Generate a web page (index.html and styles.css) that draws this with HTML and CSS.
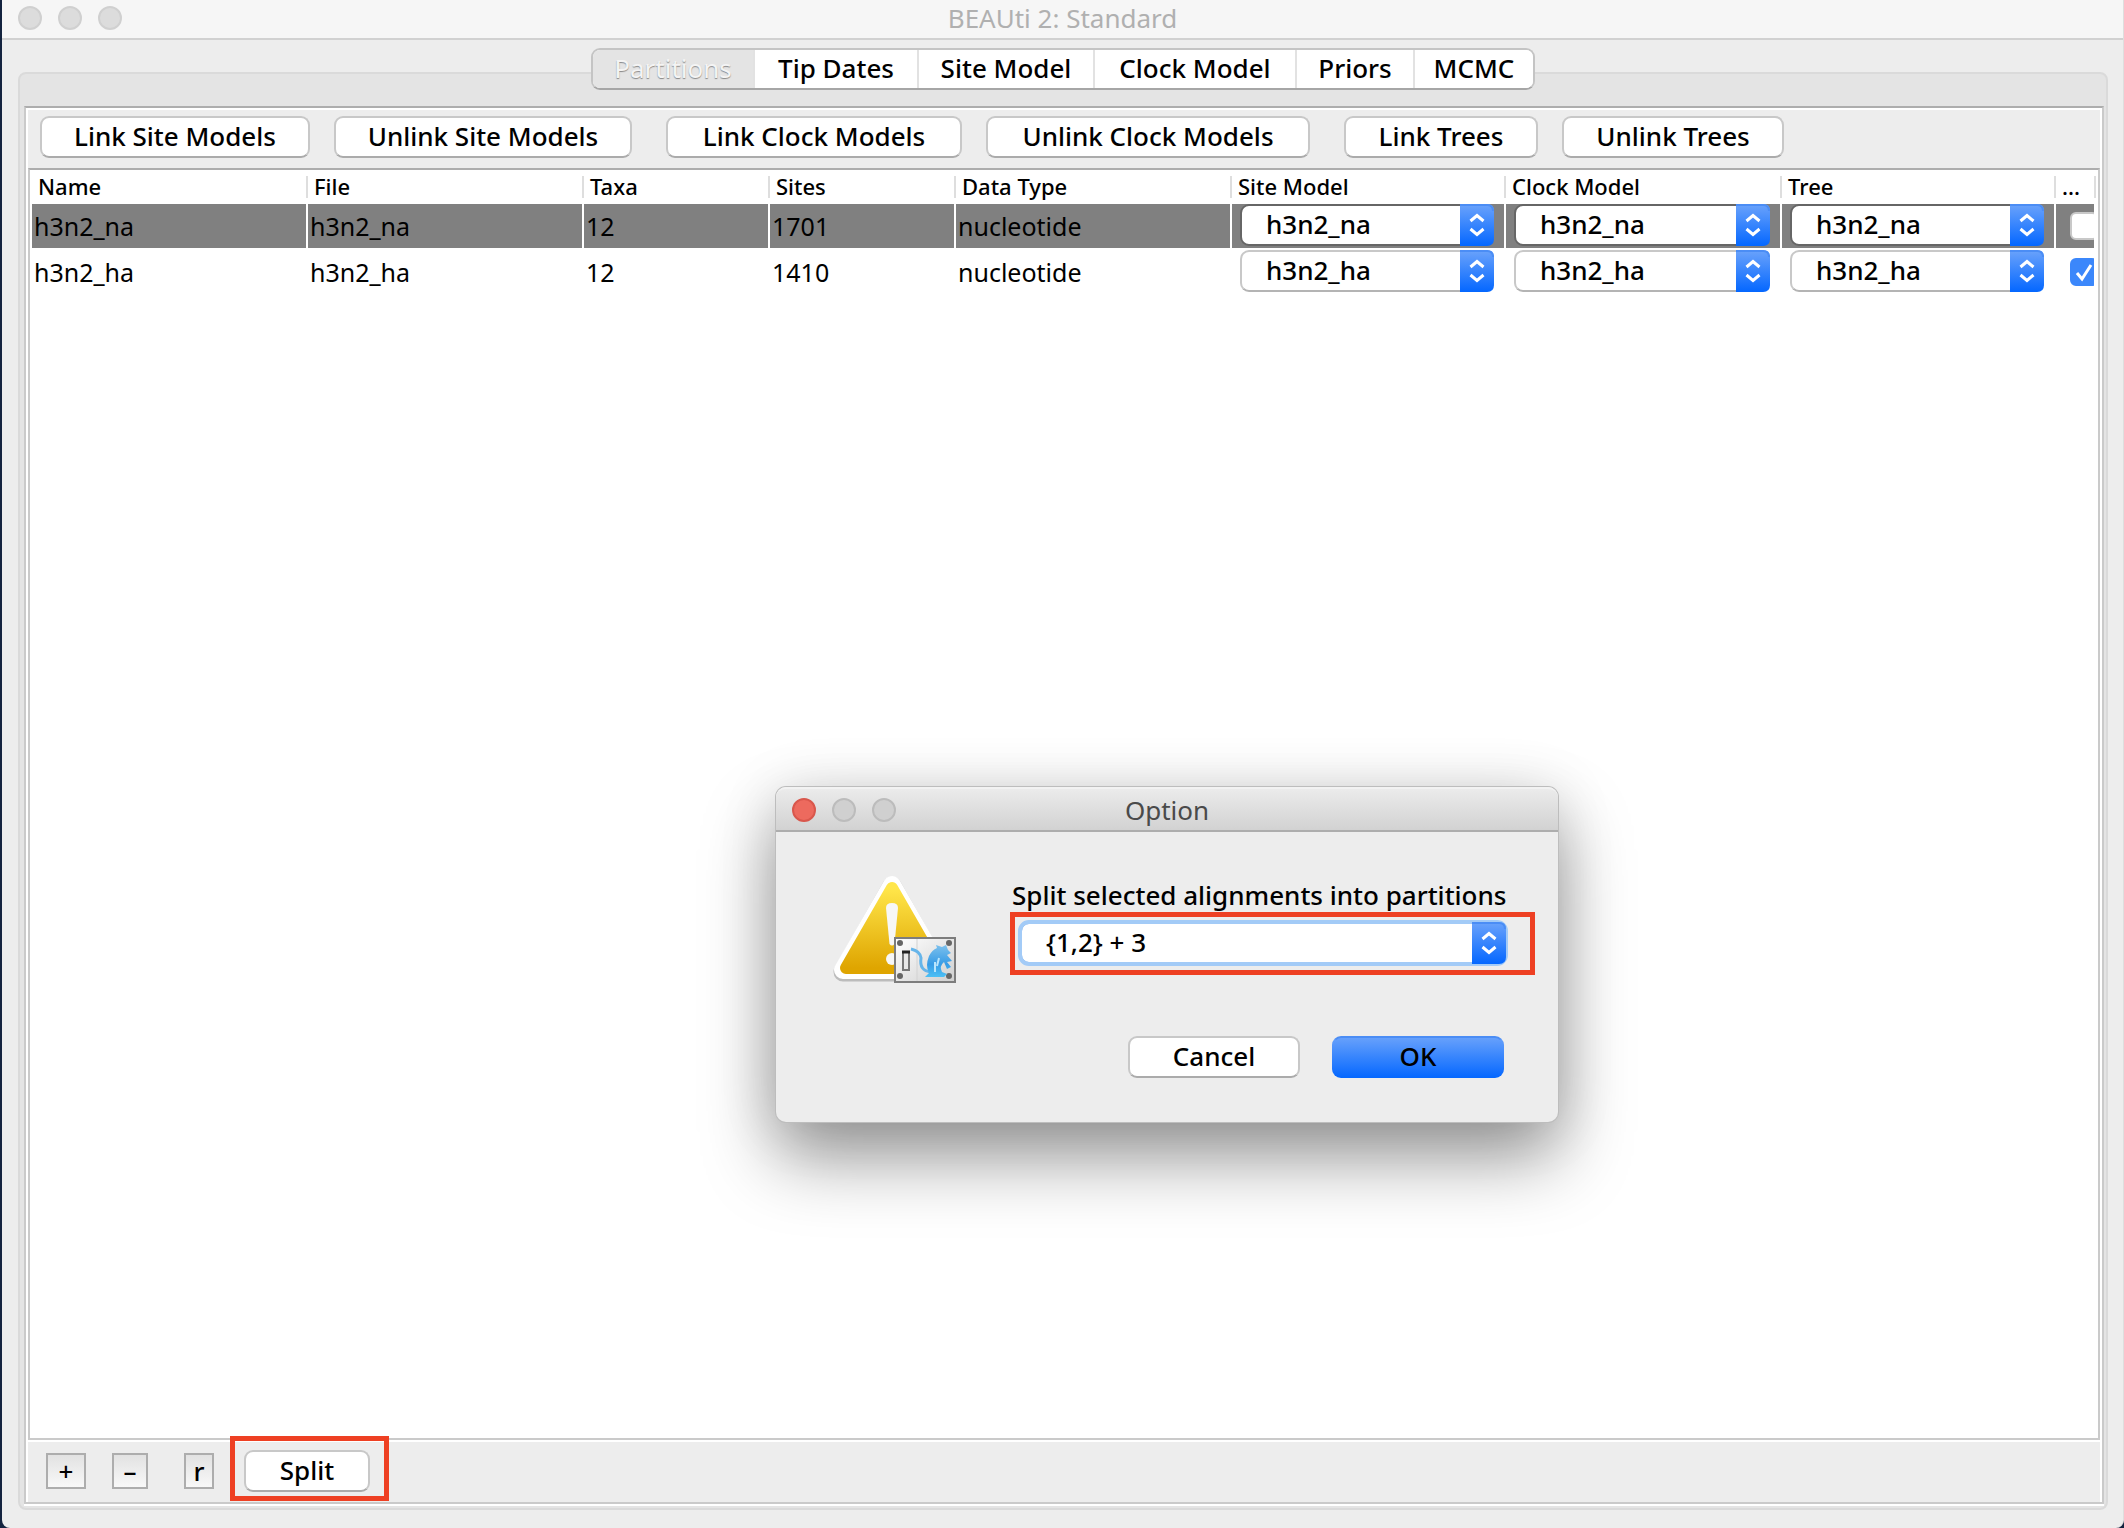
FILE: index.html
```html
<!DOCTYPE html>
<html lang="en">
<head>
<meta charset="utf-8">
<title>BEAUti 2: Standard</title>
<link rel="stylesheet" href="styles.css">
</head>
<body>
<svg width="0" height="0" class="defs" aria-hidden="true">
  <defs>
    <linearGradient id="cap" x1="0" y1="0" x2="0" y2="1"><stop offset="0" stop-color="#6ba3fb"/><stop offset="1" stop-color="#0467ff"/></linearGradient>
    <symbol id="stepper" viewBox="0 0 34 42">
      <path d="M0 0H27Q34 0 34 7V35Q34 42 27 42H0Z" fill="url(#cap)"/>
      <path d="M0 1H27Q33 1 33 7" fill="none" stroke="#4b8df5" stroke-width="2"/>
      <path d="M10.500 17L17 11.500L23.500 17M10.500 25L17 30.500L23.500 25" fill="none" stroke="#fff" stroke-width="3"/>
    </symbol>
  </defs>
</svg>
<div class="window">
  <header class="titlebar">
    <div class="lights"><i class="light"></i><i class="light"></i><i class="light"></i></div>
    <h1 class="title">BEAUti 2: Standard</h1>
  </header>
  <main class="content">
    <nav class="tabs" role="tablist">
      <button class="tab tab-on" role="tab" aria-selected="true">Partitions</button>
      <button class="tab" role="tab">Tip Dates</button>
      <button class="tab" role="tab">Site Model</button>
      <button class="tab" role="tab">Clock Model</button>
      <button class="tab" role="tab">Priors</button>
      <button class="tab" role="tab">MCMC</button>
    </nav>
    <section class="group">
      <div class="panel">
        <div class="toolbar">
          <div class="pair pair-site"><button class="btn">Link Site Models</button><button class="btn">Unlink Site Models</button></div>
          <div class="pair pair-clock"><button class="btn">Link Clock Models</button><button class="btn">Unlink Clock Models</button></div>
          <div class="pair pair-tree"><button class="btn">Link Trees</button><button class="btn">Unlink Trees</button></div>
        </div>
        <div class="sheet">
          <table class="grid">
            <colgroup><col class="c-wide"><col class="c-wide"><col class="c-num"><col class="c-num"><col class="c-wide"><col class="c-model"><col class="c-wide"><col class="c-model"><col class="c-tick"></colgroup>
            <thead>
              <tr><th>Name</th><th>File</th><th>Taxa</th><th>Sites</th><th>Data Type</th><th>Site Model</th><th>Clock Model</th><th>Tree</th><th>...</th></tr>
            </thead>
            <tbody>
              <tr class="selected">
                <td>h3n2_na</td><td>h3n2_na</td><td>12</td><td>1701</td><td>nucleotide</td>
                <td class="pick"><span class="combo"><select aria-label="Site Model"><option>h3n2_na</option></select><svg class="cap"><use href="#stepper"/></svg></span></td>
                <td class="pick"><span class="combo"><select aria-label="Clock Model"><option>h3n2_na</option></select><svg class="cap"><use href="#stepper"/></svg></span></td>
                <td class="pick"><span class="combo"><select aria-label="Tree"><option>h3n2_na</option></select><svg class="cap"><use href="#stepper"/></svg></span></td>
                <td class="ticks"><span class="tick"><input type="checkbox" aria-label="Ambiguities"></span></td>
              </tr>
              <tr>
                <td>h3n2_ha</td><td>h3n2_ha</td><td>12</td><td>1410</td><td>nucleotide</td>
                <td class="pick"><span class="combo"><select aria-label="Site Model"><option>h3n2_ha</option></select><svg class="cap"><use href="#stepper"/></svg></span></td>
                <td class="pick"><span class="combo"><select aria-label="Clock Model"><option>h3n2_ha</option></select><svg class="cap"><use href="#stepper"/></svg></span></td>
                <td class="pick"><span class="combo"><select aria-label="Tree"><option>h3n2_ha</option></select><svg class="cap"><use href="#stepper"/></svg></span></td>
                <td class="ticks"><span class="tick"><input type="checkbox" aria-label="Ambiguities" checked><svg class="check" viewBox="0 0 28 28"><path d="M7 15L12 21L21 7" fill="none" stroke="#fff" stroke-width="3"/></svg></span></td>
              </tr>
            </tbody>
          </table>
        </div>
        <footer class="footer">
          <button class="mini mini-add">+</button>
          <button class="mini mini-del">–</button>
          <button class="mini mini-r">r</button>
          <span class="mark mark-split"><button class="btn">Split</button></span>
        </footer>
      </div>
    </section>
  </main>
</div>

<div class="dialog" role="dialog" aria-labelledby="dlg-title">
  <header class="dlg-bar">
    <div class="lights"><i class="light light-close"></i><i class="light"></i><i class="light"></i></div>
    <h2 class="title" id="dlg-title">Option</h2>
  </header>
  <div class="dlg-body">
    <svg class="warn" viewBox="0 0 126 112" aria-hidden="true">
      <defs>
        <linearGradient id="gold" x1="0" y1="0" x2="0" y2="1"><stop offset="0" stop-color="#ffe64a"/><stop offset="1" stop-color="#dfa500"/></linearGradient>
        <linearGradient id="plate" x1="0" y1="0" x2="1" y2="1"><stop offset="0" stop-color="#fff"/><stop offset="1" stop-color="#cfcfcf"/></linearGradient>
        <linearGradient id="gnu" x1="0" y1="0" x2="0" y2="1"><stop offset="0" stop-color="#7cc0ec"/><stop offset=".6" stop-color="#389ce6"/><stop offset="1" stop-color="#4cc0f5"/></linearGradient>
      </defs>
      <path d="M62 12L111 98H13Z" fill="#b4b4b4" stroke="#bcbcbc" stroke-width="19" stroke-linejoin="round"/>
      <path d="M62 11L111 96H13Z" fill="#fff" stroke="#fff" stroke-width="18" stroke-linejoin="round"/>
      <path d="M62 14L108 94H16Z" fill="url(#gold)" stroke="url(#gold)" stroke-width="12" stroke-linejoin="round"/>
      <path d="M56 34Q56 29 62 29Q68 29 68 34L64.500 70Q62 73 59.500 70Z" fill="#f7f7f7"/>
      <circle cx="62" cy="85" r="6" fill="#f7f7f7"/>
      <rect x="65" y="64" width="60" height="44" fill="url(#plate)" stroke="#7d7d7d" stroke-width="2"/>
      <path d="M87 65V107" stroke="#d2d2d2"/>
      <rect x="73" y="78" width="6" height="18" fill="#e8e8e8" stroke="#777" stroke-width="2"/>
      <path d="M72 78H80" stroke="#222" stroke-width="3"/>
      <g fill="#666"><circle cx="70" cy="69" r="3"/><circle cx="119" cy="69" r="3"/><circle cx="70" cy="102" r="3"/><circle cx="119" cy="102" r="3"/></g>
      <path d="M81 75Q90 77 91 84Q89 97 101 98" fill="none" stroke="#66b5ea" stroke-width="3"/>
      <path d="M99 82Q102 76 107 74L106 71L112 73L116 71L118 76L121 79L117 81L122 87L117 88L121 93L117 95L114 88Q109 92 112 98L117 100L114 103H95L99 99Q95 92 99 82Z" fill="url(#gnu)"/>
      <path d="M105 88V98M109 84L107 92" stroke="#b9e5fc" stroke-width="2"/>
    </svg>
    <div class="form">
      <label class="ask" for="split">Split selected alignments into partitions</label>
      <span class="mark mark-ask"><span class="combo combo-focus"><select id="split"><option>{1,2} + 3</option></select><svg class="cap"><use href="#stepper"/></svg></span></span>
      <div class="actions"><button class="btn">Cancel</button><button class="btn btn-ok">OK</button></div>
    </div>
  </div>
</div>
</body>
</html>
```
FILE: styles.css
```css
* { box-sizing: border-box; }

body {
  margin: 0;
  background: #14233f;
  color: #000;
  font: 500 26px/30px "Noto Sans", "Open Sans", sans-serif;
}

button, select, input { font: inherit; color: inherit; margin: 0; }
h1, h2 { margin: 0; font: inherit; }
.defs { position: absolute; }

/* main window */
.window {
  display: flex;
  flex-direction: column;
  min-height: 100vh;
  margin-left: 2px;
  background: #ededed;
  border-right: 1px solid #dedede;
  border-radius: 0 0 8px 8px;
}

.titlebar, .dlg-bar {
  display: grid;
  grid-template-columns: 1fr auto 1fr;
  align-items: center;
}

.titlebar {
  height: 40px;
  padding: 0 16px 2px;
  background: #f6f6f6;
  border-bottom: 2px solid #d1d1d1;
}

.title { font-weight: 400; }
.titlebar .title { color: #b0b0b0; }

.lights { display: flex; gap: 16px; }

.light {
  width: 24px;
  height: 24px;
  border: 2px solid #d0d0d0;
  border-radius: 50%;
  background: #dcdcdc;
}

.content {
  flex: 1;
  display: flex;
  flex-direction: column;
  padding: 8px 15px 18px 16px;
}

.tabs {
  z-index: 1;
  align-self: center;
  display: grid;
  grid-template-columns: 160px 164px 176px 202px 118px 120px;
  height: 42px;
  margin-bottom: -18px;
  background: #fff;
  border: 2px solid #c4c4c4;
  border-bottom-color: #a6a6a6;
  border-radius: 9px;
  overflow: hidden;
}

.tab {
  padding: 0 0 2px;
  border: 0;
  border-left: 2px solid #e2e2e2;
  background: #fff;
}

.tab-on {
  border-left: 0;
  background: #e4e4e4;
  color: #f4f4f4;
  font-weight: 400;
  text-shadow: 0 1px 1px #888;
}

.group {
  flex: 1;
  display: flex;
  padding: 32px 4px 4px;
  background: #e4e4e4;
  border: 2px solid #dadada;
  border-radius: 8px;
}

.panel {
  flex: 1;
  display: flex;
  flex-direction: column;
  background: #ededed;
  border: 2px solid #cacaca;
  border-top-color: #adadad;
  box-shadow: inset 0 2px 0 #fff, inset 2px 0 0 #fff, inset -2px 0 0 #fff, 0 2px 0 #fff;
}

.toolbar {
  display: flex;
  gap: 34px;
  padding: 8px 14px 10px;
}

.pair { display: grid; gap: 24px; }
.pair-site { grid-template-columns: 270px 298px; }
.pair-clock { grid-template-columns: 296px 324px; }
.pair-tree { grid-template-columns: 194px 222px; }

.btn {
  height: 42px;
  padding: 0 0 2px;
  background: #fff;
  border: 2px solid #c8c8c8;
  border-bottom-color: #ababab;
  border-radius: 9px;
}

/* partition table */
.sheet {
  flex: 1;
  margin: 0 2px;
  padding: 0 2px;
  background: #fff;
  border: 2px solid #cacaca;
  border-top-color: #adadad;
}

.grid {
  width: 100%;
  table-layout: fixed;
  border-spacing: 0;
}

.c-wide { width: 276px; }
.c-model { width: 274px; }
.c-num { width: 186px; }
.c-tick { width: 40px; }

.grid th {
  height: 34px;
  padding: 0 6px 2px;
  font-size: 22px;
  font-weight: 500;
  text-align: left;
  background: linear-gradient(#dedede, #dedede) right center / 2px 22px no-repeat;
}

.grid td {
  height: 46px;
  padding: 0 0 0 2px;
  border: solid #fff;
  border-width: 0 2px 2px 0;
  overflow: hidden;
  font-size: 25px;
  font-weight: 400;
}

.selected td { background: #808080; background-clip: padding-box; }
.grid .pick { padding: 0 10px 2px 8px; font-size: 26px; font-weight: 500; }
.grid .ticks { padding: 0 0 0 14px; }

.combo { display: grid; height: 42px; }

.combo select {
  grid-area: 1 / 1;
  width: 100%;
  height: 42px;
  padding: 0 40px 2px 24px;
  appearance: none;
  background: #fff;
  border: 2px solid #c8c8c8;
  border-bottom-color: #b4b4b4;
  border-radius: 9px;
}

.selected select { border-color: #666; }

.cap {
  z-index: 1;
  grid-area: 1 / 1;
  justify-self: end;
  width: 34px;
  height: 42px;
  pointer-events: none;
}

.tick { display: grid; width: 28px; height: 28px; }

.tick input {
  grid-area: 1 / 1;
  width: 28px;
  height: 28px;
  appearance: none;
  background: #fff;
  border: 2px solid #c8c8c8;
  border-radius: 6px;
}

.tick input:checked { background: #3b87fb; border-color: #3b87fb; }
.check { z-index: 1; grid-area: 1 / 1; pointer-events: none; }

/* buttons below the table */
.footer {
  display: flex;
  align-items: center;
  height: 62px;
  padding: 0 20px 2px;
  border-top: 2px solid #fff;
}

.mini {
  height: 36px;
  padding: 0;
  background: linear-gradient(#e2e2e2, #f8f8f8);
  border: 2px solid #adadad;
}

.mini-add { width: 40px; margin-right: 26px; }
.mini-del { width: 36px; margin-right: 36px; }
.mini-r { width: 30px; margin-right: 30px; }

.mark { position: relative; }

.mark::after {
  content: "";
  position: absolute;
  z-index: 2;
  border: 5px solid #ee4023;
  pointer-events: none;
}

.mark-split { height: 42px; }
.mark-split .btn { width: 126px; }
.mark-split::after { inset: -14px -19px -9px -14px; }

/* dialog */
.dialog {
  position: absolute;
  left: 776px;
  top: 787px;
  width: 782px;
  background: #ededed;
  border-radius: 10px;
  box-shadow: 0 0 0 1px #bdbdbd, 0 36px 72px rgba(0, 0, 0, .4), 0 4px 60px rgba(0, 0, 0, .12);
}

.dlg-bar {
  height: 45px;
  padding: 0 16px;
  background: linear-gradient(#ebebeb, #d2d2d2);
  border-top: 2px solid #f2f2f2;
  border-bottom: 2px solid #adadad;
  border-radius: 10px 10px 0 0;
}

.dlg-bar .title { color: #4a4a4a; }
.dlg-bar .light { background: #d0d0d0; border-color: #bcbcbc; }
.dlg-bar .light-close { background: #ed6a5e; border-color: #d9574c; }

.dlg-body {
  display: flex;
  gap: 56px;
  padding: 42px 24px 44px 54px;
}

.warn { width: 126px; height: 112px; }
.form { flex: 1; display: flex; flex-direction: column; }
.ask { height: 50px; padding: 6px 0 0; white-space: nowrap; }
.mark-ask { margin: -2px 28px 0 8px; }
.mark-ask::after { inset: -10px -29px -11px -10px; }
.combo-focus select {
  border: 2px solid #7eaee6;
  outline: 4px solid #a3cbf7;
  outline-offset: -2px;
}

.actions {
  display: flex;
  justify-content: flex-end;
  gap: 32px;
  padding: 72px 30px 0 0;
}

.actions .btn { width: 172px; }

.btn-ok {
  background: linear-gradient(#6ba3fb, #0467ff) border-box;
  border-color: #4b8df5 transparent transparent;
}
```
